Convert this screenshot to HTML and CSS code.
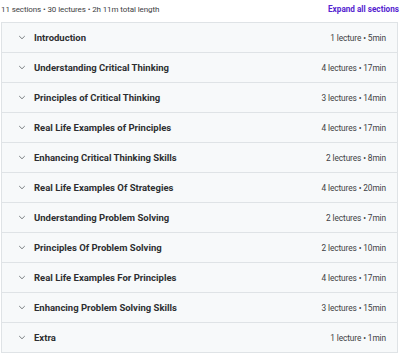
FILE: index.html
```html
<!DOCTYPE html>
<html lang="en">
<head>
    <meta charset="UTF-8">
    <title>Course content</title>
    <link rel="stylesheet" href="styles.css">
</head>
<body>
    <div class="curriculum">
        <div class="curriculum-header">
            <span class="summary">11 sections • 30 lectures • 2h 11m total length</span>
            <a href="#" class="expand-all">Expand all sections</a>
        </div>

        <div class="sections">
            <div class="section">
                <span class="chevron"><svg viewBox="0 0 10 6"><path d="M1.5 1.2 L5 4.6 L8.5 1.2"/></svg></span>
                <span class="section-title">Introduction</span>
                <span class="section-meta">1 lecture • 5min</span>
            </div>
            <div class="section">
                <span class="chevron"><svg viewBox="0 0 10 6"><path d="M1.5 1.2 L5 4.6 L8.5 1.2"/></svg></span>
                <span class="section-title">Understanding Critical Thinking</span>
                <span class="section-meta">4 lectures • 17min</span>
            </div>
            <div class="section">
                <span class="chevron"><svg viewBox="0 0 10 6"><path d="M1.5 1.2 L5 4.6 L8.5 1.2"/></svg></span>
                <span class="section-title">Principles of Critical Thinking</span>
                <span class="section-meta">3 lectures • 14min</span>
            </div>
            <div class="section">
                <span class="chevron"><svg viewBox="0 0 10 6"><path d="M1.5 1.2 L5 4.6 L8.5 1.2"/></svg></span>
                <span class="section-title">Real Life Examples of Principles</span>
                <span class="section-meta">4 lectures • 17min</span>
            </div>
            <div class="section">
                <span class="chevron"><svg viewBox="0 0 10 6"><path d="M1.5 1.2 L5 4.6 L8.5 1.2"/></svg></span>
                <span class="section-title">Enhancing Critical Thinking Skills</span>
                <span class="section-meta">2 lectures • 8min</span>
            </div>
            <div class="section">
                <span class="chevron"><svg viewBox="0 0 10 6"><path d="M1.5 1.2 L5 4.6 L8.5 1.2"/></svg></span>
                <span class="section-title">Real Life Examples Of Strategies</span>
                <span class="section-meta">4 lectures • 20min</span>
            </div>
            <div class="section">
                <span class="chevron"><svg viewBox="0 0 10 6"><path d="M1.5 1.2 L5 4.6 L8.5 1.2"/></svg></span>
                <span class="section-title">Understanding Problem Solving</span>
                <span class="section-meta">2 lectures • 7min</span>
            </div>
            <div class="section">
                <span class="chevron"><svg viewBox="0 0 10 6"><path d="M1.5 1.2 L5 4.6 L8.5 1.2"/></svg></span>
                <span class="section-title">Principles Of Problem Solving</span>
                <span class="section-meta">2 lectures • 10min</span>
            </div>
            <div class="section">
                <span class="chevron"><svg viewBox="0 0 10 6"><path d="M1.5 1.2 L5 4.6 L8.5 1.2"/></svg></span>
                <span class="section-title">Real Life Examples For Principles</span>
                <span class="section-meta">4 lectures • 17min</span>
            </div>
            <div class="section">
                <span class="chevron"><svg viewBox="0 0 10 6"><path d="M1.5 1.2 L5 4.6 L8.5 1.2"/></svg></span>
                <span class="section-title">Enhancing Problem Solving Skills</span>
                <span class="section-meta">3 lectures • 15min</span>
            </div>
            <div class="section">
                <span class="chevron"><svg viewBox="0 0 10 6"><path d="M1.5 1.2 L5 4.6 L8.5 1.2"/></svg></span>
                <span class="section-title">Extra</span>
                <span class="section-meta">1 lecture • 1min</span>
            </div>
        </div>
    </div>
</body>
</html>
```

FILE: styles.css
```css
:root {
    --text-color: #2d2f31;
    --muted-color: #3e4143;
    --border-color: #dfe3e6;
    --row-background: #f7f9fa;
    --link-color: #5624d0;
}

body {
    font-family: Roboto, 'Liberation Sans', Arial, sans-serif;
    margin: 0;
    padding: 0;
    background-color: #ffffff;
    color: var(--text-color);
}

.curriculum {
    width: 397px;
    padding-left: 1px;
}

.curriculum-header {
    height: 22px;
    display: flex;
    align-items: center;
    justify-content: space-between;
    padding-bottom: 4px;
    box-sizing: border-box;
}

.summary {
    font-size: 8px;
    color: var(--muted-color);
    letter-spacing: -0.1px;
}

.expand-all {
    font-size: 8.2px;
    color: var(--link-color);
    font-weight: 700;
    text-decoration: none;
    margin-right: -1px;
}

.sections {
    border: 1px solid var(--border-color);
    border-bottom: none;
}

.section {
    height: 29px;
    display: flex;
    align-items: center;
    background-color: var(--row-background);
    border-bottom: 1px solid var(--border-color);
}

.chevron {
    width: 8px;
    height: 5px;
    margin-left: 16px;
    margin-right: 8px;
    display: flex;
}

.chevron svg {
    width: 8px;
    height: 5px;
    fill: none;
    stroke: #6a6f73;
    stroke-width: 1.1;
}

.section-title {
    flex: 1;
    font-weight: 700;
    font-size: 9.5px;
    color: var(--text-color);
}

.section-meta {
    font-size: 8.3px;
    color: var(--muted-color);
    letter-spacing: -0.1px;
    margin-right: 11px;
}
```
